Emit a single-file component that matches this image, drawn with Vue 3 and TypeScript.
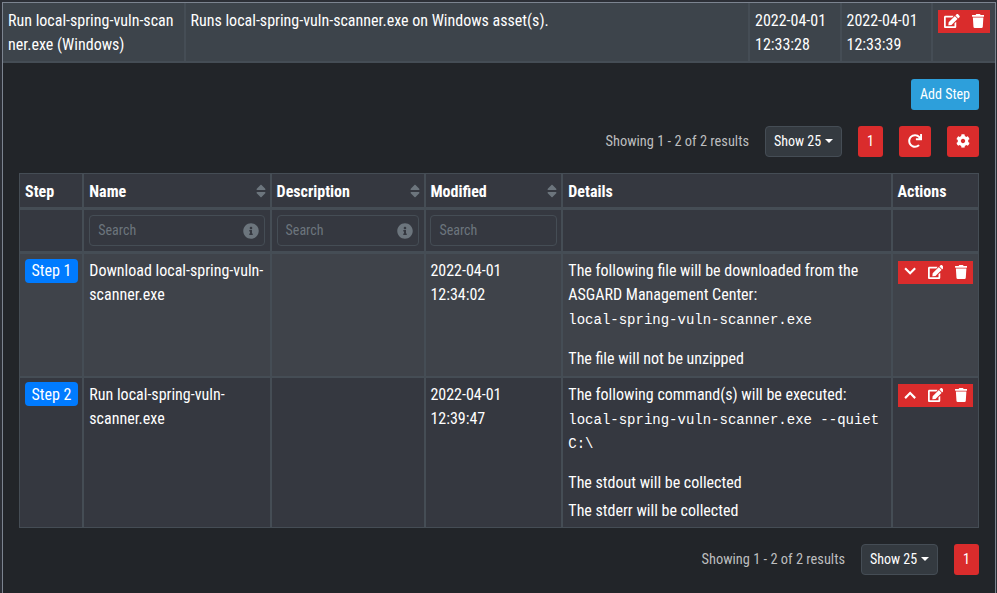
<script setup lang="ts">
import { h, type FunctionalComponent } from 'vue'

type IconName = 'edit' | 'trash' | 'redo' | 'cog' | 'info' | 'down' | 'up' | 'sort'

interface IconShape {
  w: number
  d: string
}

const shapes: Record<IconName, IconShape> = {
  edit: {
    w: 576,
    d: 'M402.6 83.2l90.2 90.2c3.8 3.8 3.8 10 0 13.8L274.4 405.6l-92.8 10.3c-12.4 1.4-22.9-9.1-21.5-21.5l10.3-92.8L388.8 83.2c3.8-3.8 10-3.8 13.8 0zm162-22.9l-48.8-48.8c-15.2-15.2-39.9-15.2-55.2 0l-35.4 35.4c-3.8 3.8-3.8 10 0 13.8l90.2 90.2c3.8 3.8 10 3.8 13.8 0l35.4-35.4c15.2-15.3 15.2-40 0-55.2zM384 346.2V448H64V128h229.8c3.2 0 6.2-1.3 8.5-3.5l40-40c7.6-7.6 2.2-20.5-8.5-20.5H48C21.5 64 0 85.5 0 112v352c0 26.5 21.5 48 48 48h352c26.5 0 48-21.5 48-48V306.2c0-10.7-12.9-16-20.5-8.5l-40 40c-2.2 2.3-3.5 5.3-3.5 8.5z',
  },
  trash: {
    w: 448,
    d: 'M432 32H312l-9.4-18.7A24 24 0 0 0 281.1 0H166.8a23.72 23.72 0 0 0-21.4 13.3L136 32H16A16 16 0 0 0 0 48v32a16 16 0 0 0 16 16h416a16 16 0 0 0 16-16V48a16 16 0 0 0-16-16zM32 128l21.2 339a48 48 0 0 0 47.9 45h245.8a48 48 0 0 0 47.9-45L416 128z',
  },
  redo: {
    w: 512,
    d: 'M500.33 0h-47.41a12 12 0 0 0-12 12.57l4 82.76A247.42 247.42 0 0 0 256 8C119.34 8 7.9 119.53 8 256.19 8.1 393.07 119.1 504 256 504a247.1 247.1 0 0 0 166.18-63.91 12 12 0 0 0 .48-17.43l-34-34a12 12 0 0 0-16.38-.55A176 176 0 1 1 402.1 157.8l-101.53-4.87a12 12 0 0 0-12.57 12v47.41a12 12 0 0 0 12 12h200.33a12 12 0 0 0 12-12V12a12 12 0 0 0-12-12z',
  },
  cog: {
    w: 512,
    d: 'M487.4 315.7l-42.6-24.6c4.3-23.2 4.3-47 0-70.2l42.6-24.6c4.9-2.8 7.1-8.6 5.5-14-11.1-35.6-30-67.8-54.7-94.6-3.8-4.1-10-5.1-14.8-2.3L380.8 110c-17.9-15.4-38.5-27.3-60.8-35.1V25.8c0-5.6-3.9-10.5-9.4-11.7-36.7-8.2-74.3-7.8-109.2 0-5.5 1.2-9.4 6.1-9.4 11.7V75c-22.2 7.9-42.8 19.8-60.8 35.1L88.7 85.5c-4.9-2.8-11-1.9-14.8 2.3-24.7 26.7-43.6 58.9-54.7 94.6-1.7 5.4.6 11.2 5.5 14L67.3 221c-4.3 23.2-4.3 47 0 70.2l-42.6 24.6c-4.9 2.8-7.1 8.6-5.5 14 11.1 35.6 30 67.8 54.7 94.6 3.8 4.1 10 5.1 14.8 2.3l42.6-24.6c17.9 15.4 38.5 27.3 60.8 35.1v49.2c0 5.6 3.9 10.5 9.4 11.7 36.7 8.2 74.3 7.8 109.2 0 5.5-1.2 9.4-6.1 9.4-11.7v-49.2c22.2-7.9 42.8-19.8 60.8-35.1l42.6 24.6c4.9 2.8 11 1.9 14.8-2.3 24.7-26.7 43.6-58.9 54.7-94.6 1.5-5.5-.7-11.3-5.6-14.1zM256 336c-44.1 0-80-35.9-80-80s35.9-80 80-80 80 35.9 80 80-35.9 80-80 80z',
  },
  info: {
    w: 512,
    d: 'M256 8C119.043 8 8 119.083 8 256c0 136.997 111.043 248 248 248s248-111.003 248-248C504 119.083 392.957 8 256 8zm0 110c23.196 0 42 18.804 42 42s-18.804 42-42 42-42-18.804-42-42 18.804-42 42-42zm56 254c0 6.627-5.373 12-12 12h-88c-6.627 0-12-5.373-12-12v-24c0-6.627 5.373-12 12-12h12v-64h-12c-6.627 0-12-5.373-12-12v-24c0-6.627 5.373-12 12-12h64c6.627 0 12 5.373 12 12v100h12c6.627 0 12 5.373 12 12v24z',
  },
  down: { w: 448, d: 'M224 360L12 148l56-56 156 156 156-156 56 56z' },
  up: { w: 448, d: 'M224 130L12 342l56 56 156-156 156 156 56-56z' },
  sort: {
    w: 320,
    d: 'M41 288h238c21.4 0 32.1 25.9 17 41L177 448c-9.4 9.4-24.6 9.4-33.9 0L24 329c-15.1-15.1-4.4-41 17-41zm255-105L177 64c-9.4-9.4-24.6-9.4-33.9 0L24 183c-15.1 15.1-4.4 41 17 41h238c21.4 0 32.1-25.9 17-41z',
  },
}

const Icon: FunctionalComponent<{ name: IconName; size?: number }> = (props) => {
  const shape = shapes[props.name]
  const size = props.size ?? 14
  return h(
    'svg',
    {
      viewBox: `0 0 ${shape.w} 512`,
      width: (size * shape.w) / 512,
      height: size,
      fill: 'currentColor',
      'aria-hidden': 'true',
    },
    [h('path', { d: shape.d })],
  )
}
Icon.props = ['name', 'size']

interface Column {
  label: string
  sortable?: boolean
  search?: boolean
  info?: boolean
}

const columns: Column[] = [
  { label: 'Step' },
  { label: 'Name', sortable: true, search: true, info: true },
  { label: 'Description', sortable: true, search: true, info: true },
  { label: 'Modified', sortable: true, search: true },
  { label: 'Details' },
  { label: 'Actions' },
]

interface Step {
  label: string
  name: string[]
  modified: string[]
  intro: string[]
  code: string[]
  notes: string[]
  move: 'up' | 'down'
}

const steps: Step[] = [
  {
    label: 'Step 1',
    name: ['Download local-spring-vuln-', 'scanner.exe'],
    modified: ['2022-04-01', '12:34:02'],
    intro: ['The following file will be downloaded from the', 'ASGARD Management Center:'],
    code: ['local-spring-vuln-scanner.exe'],
    notes: ['The file will not be unzipped'],
    move: 'down',
  },
  {
    label: 'Step 2',
    name: ['Run local-spring-vuln-', 'scanner.exe'],
    modified: ['2022-04-01', '12:39:47'],
    intro: ['The following command(s) will be executed:'],
    code: ['local-spring-vuln-scanner.exe --quiet', 'C:\\'],
    notes: ['The stdout will be collected', 'The stderr will be collected'],
    move: 'up',
  },
]
</script>

<template>
  <main class="page">
    <section class="playbook">
      <div class="summary">
        <div class="scell"><div>Run local-spring-vuln-scan</div><div>ner.exe (Windows)</div></div>
        <div class="scell">Runs local-spring-vuln-scanner.exe on Windows asset(s).</div>
        <div class="scell"><div>2022-04-01</div><div>12:33:28</div></div>
        <div class="scell"><div>2022-04-01</div><div>12:33:39</div></div>
        <div class="scell">
          <div class="group">
            <button class="act wide"><Icon name="edit" /></button>
            <button class="act"><Icon name="trash" /></button>
          </div>
        </div>
      </div>

      <div class="content">
        <div class="bar"><button class="btn add">Add Step</button></div>
        <div class="bar tools">
          <span class="results">Showing 1 - 2 of 2 results</span>
          <button class="btn show">Show 25<i class="caret"></i></button>
          <button class="btn red num">1</button>
          <button class="btn red sq"><Icon name="redo" /></button>
          <button class="btn red sq"><Icon name="cog" /></button>
        </div>

        <div class="table">
          <div class="row head">
            <div v-for="c in columns" :key="c.label" class="cell">
              <span>{{ c.label }}</span>
              <Icon v-if="c.sortable" name="sort" :size="16" class="sort" />
            </div>
          </div>
          <div class="row filter">
            <div v-for="c in columns" :key="c.label" class="cell">
              <div v-if="c.search" class="search">
                <span>Search</span>
                <Icon v-if="c.info" name="info" :size="16" />
              </div>
            </div>
          </div>
          <div v-for="s in steps" :key="s.label" class="row step">
            <div class="cell"><span class="badge">{{ s.label }}</span></div>
            <div class="cell"><div v-for="l in s.name" :key="l">{{ l }}</div></div>
            <div class="cell"></div>
            <div class="cell"><div v-for="l in s.modified" :key="l">{{ l }}</div></div>
            <div class="cell">
              <div v-for="l in s.intro" :key="l">{{ l }}</div>
              <div class="code"><div v-for="l in s.code" :key="l">{{ l }}</div></div>
              <div v-for="l in s.notes" :key="l" class="note">{{ l }}</div>
            </div>
            <div class="cell">
              <div class="group">
                <button class="act"><Icon :name="s.move" /></button>
                <button class="act wide"><Icon name="edit" /></button>
                <button class="act"><Icon name="trash" /></button>
              </div>
            </div>
          </div>
        </div>

        <div class="bar foot">
          <span class="results">Showing 1 - 2 of 2 results</span>
          <button class="btn show">Show 25<i class="caret"></i></button>
          <button class="btn red num">1</button>
        </div>
      </div>
    </section>
  </main>
</template>

<style>
body {
  background: #2c2f36;
  overflow: hidden;
}
</style>

<style scoped>
.page,
.page * {
  box-sizing: border-box;
}
.page {
  height: 593px;
  padding: 2px 1px 0 2px;
  overflow: hidden;
  color: #fff;
  font: 16px/24px 'Roboto Condensed', Roboto, sans-serif;
  font-stretch: 75%;
  white-space: nowrap;
}
.playbook {
  height: 620px;
  border: 1px solid #7c8490;
  background: #222529;
}
.summary {
  display: grid;
  grid-template-columns: 183px 564px 92px 91px 1fr;
  height: 60px;
  border-bottom: 2px solid #454d55;
  background: #3d444b;
}
.scell {
  padding: 6px 5px 0;
  border-right: 2px solid #454d55;
}
.scell:nth-child(2),
.scell:nth-child(4) {
  padding-left: 4.5px;
}
.scell:last-child {
  padding-top: 7px;
  border-right: 0;
}
.group {
  display: flex;
  width: max-content;
}
button {
  margin: 0;
  border: 0;
  color: #fff;
  font: inherit;
  font-stretch: inherit;
}
.act {
  display: flex;
  align-items: center;
  justify-content: center;
  width: 24px;
  height: 23px;
  padding: 0 0 1px;
  background: #da2c2c;
}
.act.wide {
  width: 27px;
}
.scell .act {
  width: 24px;
}
.scell .act.wide {
  width: 28px;
}
.content {
  padding: 16px 16px 0;
}
.bar {
  display: flex;
  justify-content: flex-end;
  align-items: center;
  height: 31px;
  gap: 16px;
}
.tools {
  margin: 16px 0;
}
.foot {
  margin-top: 16px;
}
.btn {
  display: flex;
  align-items: center;
  justify-content: center;
  height: 31px;
  padding: 0;
  border-radius: 3px;
  font-size: 14px;
  line-height: 21px;
}
.sq {
  padding-bottom: 1px;
}
.add {
  width: 68px;
  background: #2d9fdb;
}
.show {
  width: 77px;
  border: 1px solid #454d55;
  background: #343a40;
  border-radius: 4px;
}
.caret {
  margin: -2px 0 0 4px;
  border: 4px solid transparent;
  border-top-color: #fff;
  border-bottom: 0;
}
.red {
  background: #da2c2c;
}
.num {
  width: 25px;
}
.sq {
  width: 32px;
}
.results {
  color: #bdbebf;
  font-size: 14.4px;
}
.table {
  border: 1px solid #454d55;
}
.row {
  display: grid;
  grid-template-columns: 64px 188px 154px 137px 330px 1fr;
  background: #353840;
}
.cell {
  padding: 0 5px;
  border-right: 2px solid #454d55;
}
.cell:nth-child(2) {
  padding-left: 5.3px;
}
.cell:nth-child(3) {
  padding-left: 4.6px;
}
.cell:nth-child(4) {
  padding: 0 4px 0 4.4px;
}
.cell:nth-child(5) {
  padding-left: 5.3px;
}
.head .cell:nth-child(6) {
  padding-left: 4.5px;
}
.cell:last-child {
  border-right: 0;
}
.head {
  height: 36px;
  border-bottom: 3px solid #454d55;
  font-weight: 700;
}
.head .cell {
  display: flex;
  align-items: center;
  justify-content: space-between;
  padding-top: 2px;
}
.sort {
  margin: -1px -1px 0 0;
  color: #6c757d;
}
.cell:nth-child(4) .sort {
  margin-right: 0;
}
.filter {
  height: 44px;
  border-bottom: 3px solid #454d55;
}
.search {
  display: flex;
  align-items: center;
  justify-content: space-between;
  height: 31px;
  margin-top: 5px;
  padding: 0 5px 0 8px;
  border: 1px solid #454d55;
  border-radius: 4px;
  color: #6c757d;
  font-size: 14px;
}
.search span {
  padding-bottom: 2px;
}
.step {
  height: 124px;
  border-bottom: 2px solid #454d55;
}
.step .cell {
  padding-top: 5px;
}
.step:nth-child(odd) {
  background: #3f434a;
}
.step:last-child {
  height: 149px;
  border-bottom: 0;
}
.step .cell:last-child {
  padding-top: 7px;
}
.step:last-child .cell:last-child {
  padding-top: 6px;
}
.step:last-child .cell:first-child {
  padding-top: 4px;
}
.badge {
  display: block;
  width: 53px;
  height: 24px;
  border-radius: 4px;
  background: #007bff;
  text-align: center;
}
.step:last-child .badge {
  line-height: 25px;
}
.code {
  padding-top: 1px;
  margin-bottom: 15px;
  font: 14px/24px 'Liberation Mono', monospace;
}
.note + .note {
  margin-top: 4px;
}
</style>
